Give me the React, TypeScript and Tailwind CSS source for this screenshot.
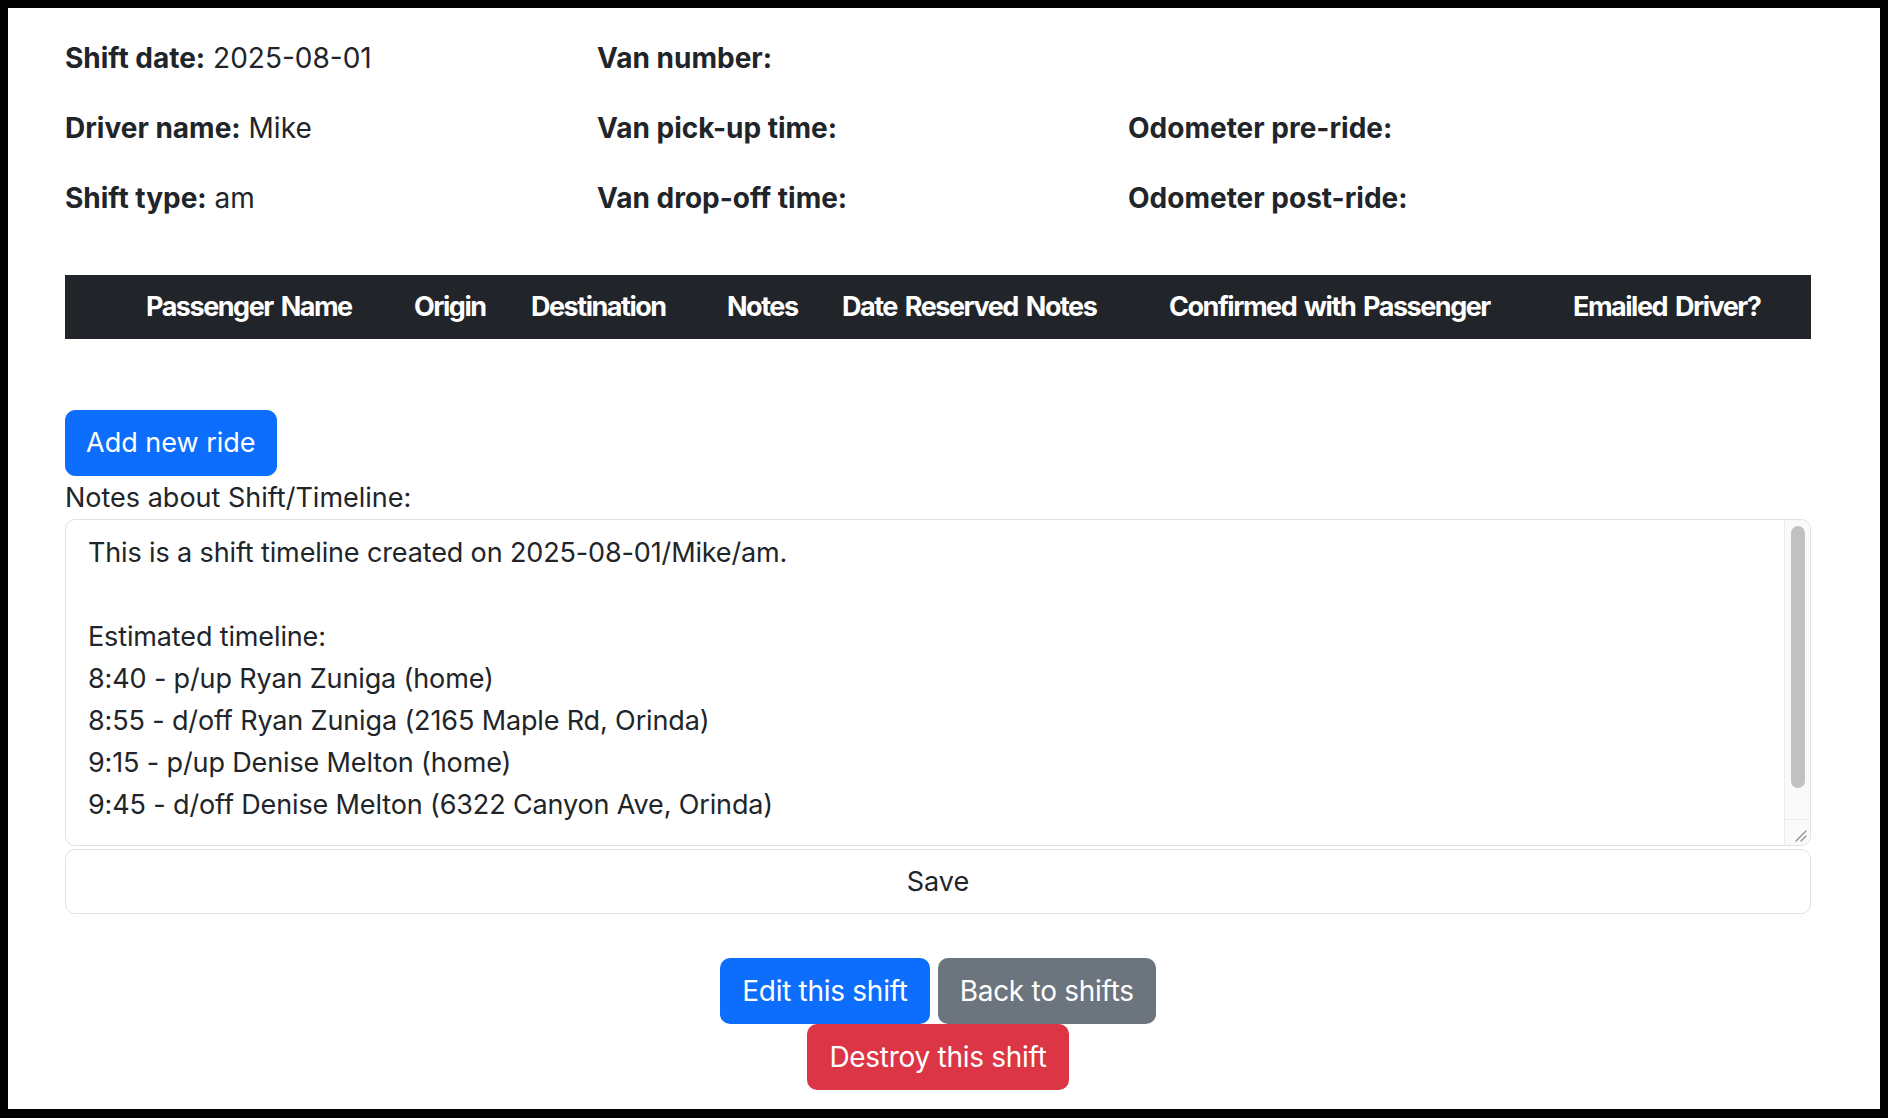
import React from 'react';

const infoRows: [string, string][][] = [
  [['Shift date:', '2025-08-01'], ['Van number:', ''], ['', '']],
  [['Driver name:', 'Mike'], ['Van pick-up time:', ''], ['Odometer pre-ride:', '']],
  [['Shift type:', 'am'], ['Van drop-off time:', ''], ['Odometer post-ride:', '']],
];

const columns: { label: string; width: string }[] = [
  { label: '', width: 'w-[81px]' },
  { label: 'Passenger Name', width: 'w-[268px]' },
  { label: 'Origin', width: 'w-[117px]' },
  { label: 'Destination', width: 'w-[196px]' },
  { label: 'Notes', width: 'w-[115px]' },
  { label: 'Date Reserved Notes', width: 'w-[327px]' },
  { label: 'Confirmed with Passenger', width: 'w-[404px]' },
  { label: 'Emailed Driver?', width: '' },
];

const timeline = [
  'This is a shift timeline created on 2025-08-01/Mike/am.',
  '',
  'Estimated timeline:',
  '8:40 - p/up Ryan Zuniga (home)',
  '8:55 - d/off Ryan Zuniga (2165 Maple Rd, Orinda)',
  '9:15 - p/up Denise Melton (home)',
  '9:45 - d/off Denise Melton (6322 Canyon Ave, Orinda)',
];

export default function App() {
  return (
    <div className="h-screen bg-black pt-[8px] pb-[9px] px-[8px]">
      <div className="h-full bg-white pl-[57px] pr-[69px] pt-[29px] text-[28px] leading-[42px] text-[#212529] font-['Inter','Liberation_Sans',sans-serif]">
        {/* Shift details */}
        <div className="grid grid-cols-[532px_531px_1fr] gap-y-[28px]">
          {infoRows.flat().map(([label, value], i) => (
            <p key={i} className="h-[42px]">
              {label && <strong className="font-bold">{label}</strong>}
              {value && ` ${value}`}
            </p>
          ))}
        </div>

        {/* Rides table */}
        <table className="mt-[56px] w-full table-fixed">
          <thead>
            <tr className="bg-[#212529] text-white">
              {columns.map((col, i) => (
                <th
                  key={i}
                  className={`${col.width} h-[64px] p-0 text-left text-[27px] font-bold tracking-[-0.055em] [word-spacing:3px] whitespace-nowrap`}
                >
                  {col.label}
                </th>
              ))}
            </tr>
          </thead>
          <tbody />
        </table>

        <button className="mt-[71px] block rounded-[10px] border border-[#0d6efd] bg-[#0d6efd] px-[20px] py-[11px] text-[27px] text-white">
          Add new ride
        </button>

        <label className="mt-[1px] block h-[42px] text-[27px]">Notes about Shift/Timeline:</label>

        {/* Notes textarea */}
        <div className="flex h-[327px] overflow-hidden rounded-[10px] border border-[#dee2e6]">
          <div className="flex-1 whitespace-pre pl-[22px] pt-[12px] text-[27px] tracking-[-0.005em]">
            {timeline.map((line, i) => (
              <div key={i} className="h-[42px]">{line}</div>
            ))}
          </div>
          <div className="flex w-[26px] flex-col border-l border-[#ececec] bg-[#fafafa]">
            <div className="flex-1 pt-[6px]">
              <div className="mx-auto h-[262px] w-[14px] rounded-full bg-[#c1c1c1]" />
            </div>
            <div className="flex h-[26px] items-end justify-end border-t border-[#ececec] p-[3px]">
              <svg width="14" height="14" viewBox="0 0 14 14">
                <path d="M13 3 L3 13 M13 8 L8 13" stroke="#8a8a8a" strokeWidth="1.2" strokeLinecap="round" />
              </svg>
            </div>
          </div>
        </div>

        <button className="mt-[3px] block h-[65px] w-full rounded-[10px] border border-[#dee2e6] bg-white text-[27px] text-[#212529]">
          Save
        </button>

        {/* Actions */}
        <div className="mt-[44px] flex justify-center gap-[8px] text-[28px] tracking-[-0.01em]">
          <button className="rounded-[10px] bg-[#0d6efd] px-[22px] py-[12px] text-white">Edit this shift</button>
          <button className="rounded-[10px] bg-[#6c757d] px-[22px] py-[12px] text-white">Back to shifts</button>
        </div>
        <div className="flex justify-center text-[28px] tracking-[-0.01em]">
          <button className="rounded-[10px] bg-[#dc3545] px-[22px] py-[12px] text-white">Destroy this shift</button>
        </div>
      </div>
    </div>
  );
}
